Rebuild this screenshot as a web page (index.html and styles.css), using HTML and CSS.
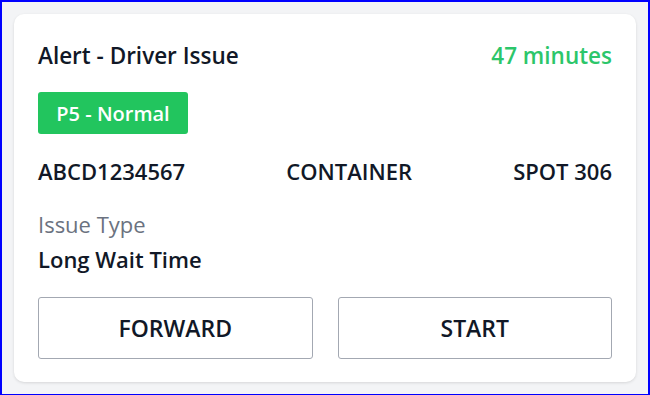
FILE: index.html
```html
<!DOCTYPE html>
<html lang="en">
<head>
  <meta charset="UTF-8">
  <meta name="viewport" content="width=device-width, initial-scale=1.0">
  <title>Alert</title>
  <link rel="stylesheet" href="styles.css">
</head>
<body>
  <div class="frame">
    <div class="card">
      <div class="card-header">
        <div class="title">Alert - Driver Issue</div>
        <div class="elapsed">47 minutes</div>
      </div>
      <div class="badge">P5 - Normal</div>
      <div class="details">
        <span>ABCD1234567</span>
        <span>CONTAINER</span>
        <span>SPOT 306</span>
      </div>
      <div class="issue">
        <div class="issue-label">Issue Type</div>
        <div class="issue-value">Long Wait Time</div>
      </div>
      <div class="actions">
        <button class="button">FORWARD</button>
        <button class="button">START</button>
      </div>
    </div>
  </div>
</body>
</html>
```

FILE: styles.css
```css
* {
  box-sizing: border-box;
}

body {
  margin: 0;
  font-family: "Open Sans", "Noto Sans", sans-serif;
  color: #111827;
}

.frame {
  width: 650px;
  height: 395px;
  border: 2px solid #0000ff;
  border-bottom-width: 1px;
  background-color: #f3f4f6;
  padding: 12px;
}

.card {
  background-color: #fff;
  border-radius: 10px;
  box-shadow: 0 1px 3px rgba(0, 0, 0, 0.12);
  height: 100%;
  padding: 27px 24px 23px 24px;
  display: flex;
  flex-direction: column;
}

.card-header {
  display: flex;
  justify-content: space-between;
  align-items: baseline;
  font-size: 22.5px;
  font-weight: 600;
  line-height: 30px;
}

.elapsed {
  color: #2cc66a;
}

.badge {
  align-self: flex-start;
  margin-top: 21px;
  width: 150px;
  height: 42px;
  background-color: #22c55e;
  color: #fff;
  border-radius: 3px;
  font-size: 20px;
  font-weight: 600;
  display: flex;
  justify-content: center;
  align-items: center;
}

.details {
  margin-top: 22px;
  display: flex;
  justify-content: space-between;
  font-size: 22px;
  font-weight: 600;
  line-height: 30px;
}

.issue {
  margin-top: 23px;
  display: flex;
  flex-direction: column;
  gap: 5px;
}

.issue-label {
  font-size: 22px;
  color: #6b7280;
  line-height: 30px;
}

.issue-value {
  font-size: 22px;
  font-weight: 600;
  line-height: 30px;
}

.actions {
  margin-top: auto;
  display: grid;
  grid-template-columns: 1fr 1fr;
  gap: 25px;
}

.button {
  height: 62px;
  background-color: #fff;
  border: 1px solid #a3a8b2;
  border-radius: 3px;
  font-family: inherit;
  font-size: 23px;
  font-weight: 600;
  color: #111827;
  cursor: pointer;
}
```
